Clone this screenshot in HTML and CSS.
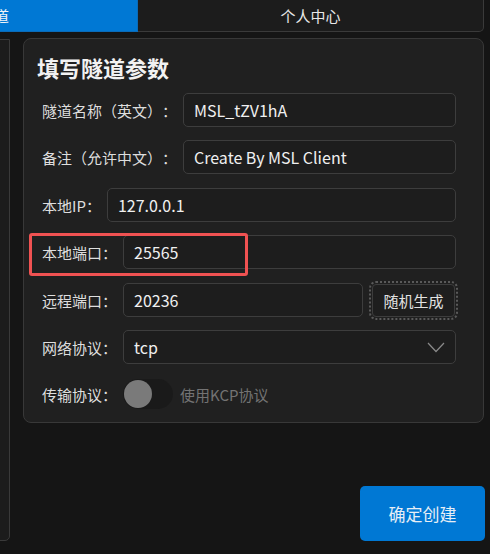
FILE: index.html
```html
<!DOCTYPE html>
<html lang="zh-CN">
<head>
<meta charset="utf-8">
<title>MSL</title>
<link rel="stylesheet" href="styles.css">
</head>
<body>
<div class="page">
  <div class="tabs">
    <div class="tab tab-active">创建隧道</div>
    <div class="tab tab-normal">个人中心</div>
  </div>
  <div class="main">
    <div class="side-panel"></div>
    <div class="content">
      <div class="card">
        <div class="card-title">填写隧道参数</div>
        <div class="form">
          <div class="row r1">
            <span class="label">隧道名称（英文）：</span>
            <div class="input">MSL_tZV1hA</div>
          </div>
          <div class="row r2">
            <span class="label">备注（允许中文）：</span>
            <div class="input">Create By MSL Client</div>
          </div>
          <div class="row r3">
            <span class="label">本地IP：</span>
            <div class="input">127.0.0.1</div>
          </div>
          <div class="row r4 highlight-row">
            <span class="label">本地端口：</span>
            <div class="input">25565</div>
            <div class="highlight"></div>
          </div>
          <div class="row r5">
            <span class="label">远程端口：</span>
            <div class="input">20236</div>
            <button class="btn-random">随机生成</button>
          </div>
          <div class="row r6">
            <span class="label">网络协议：</span>
            <div class="input select">
              <span>tcp</span>
              <svg class="chevron" width="18" height="11" viewBox="0 0 18 11"><polyline points="1,1 9,9.5 17,1" fill="none" stroke="#8a8a8a" stroke-width="1.2"/></svg>
            </div>
          </div>
          <div class="row r7">
            <span class="label">传输协议：</span>
            <div class="toggle"><div class="knob"></div></div>
            <span class="toggle-text">使用KCP协议</span>
          </div>
        </div>
      </div>
      <button class="btn-primary">确定创建</button>
    </div>
  </div>
</div>
</body>
</html>
```

FILE: styles.css
```css
html, body {
  margin: 0;
  padding: 0;
}
body {
  background: #151515;
  width: 490px;
  height: 554px;
  overflow: hidden;
  font-family: "Noto Sans CJK SC", "Noto Sans", sans-serif;
  color: #e6e6e6;
  text-spacing-trim: space-all;
}
.page {
  width: 484px;
  height: 554px;
  display: flex;
  flex-direction: column;
}
.tabs {
  display: flex;
  height: 32px;
  margin-top: -1px;
}
.tab {
  box-sizing: border-box;
  height: 33px;
  display: flex;
  align-items: center;
  font-size: 15px;
  color: #e8e8e8;
}
.tab-active {
  width: 338px;
  margin-left: -200px;
  background: #0078d4;
  border: 1px solid #0b6bb8;
  justify-content: flex-end;
  padding-right: 128px;
  color: #f0f4f8;
}
.tab-normal {
  flex: 1;
  background: #1c1c1c;
  border: 1px solid #3a3a3a;
  border-left: none;
  border-bottom-right-radius: 5px;
  justify-content: center;
}
.main {
  display: flex;
  flex: 1;
  margin-top: 7px;
  margin-bottom: 13px;
}
.side-panel {
  box-sizing: border-box;
  width: 110px;
  margin-left: -100px;
  margin-top: 1px;
  background: #1c1c1c;
  border: 1px solid #3a3a3a;
  border-radius: 0 0 5px 0;
}
.content {
  flex: 1;
  display: flex;
  flex-direction: column;
  margin-left: 13px;
}
.card {
  box-sizing: border-box;
  height: 385px;
  background: #202020;
  border: 1px solid #383838;
  border-radius: 8px;
  padding: 0 27px 0 13px;
}
.card-title {
  margin-top: 13px;
  height: 30px;
  line-height: 30px;
  font-size: 22px;
  font-weight: 700;
  color: #f2f2f2;
}
.form {
  padding-left: 5px;
  margin-top: 11px;
}
.row {
  position: relative;
  display: flex;
  align-items: center;
  height: 34px;
}
.r2 { margin-top: 13px; }
.r3 { margin-top: 14px; }
.r4 { margin-top: 13px; }
.r5 { margin-top: 14px; }
.r6 { margin-top: 13px; }
.r7 { margin-top: 15px; height: 30px; }
.label {
  font-size: 15px;
  color: #dedede;
  white-space: nowrap;
  margin-right: 6px;
}
.input {
  box-sizing: border-box;
  flex: 1;
  height: 34px;
  display: flex;
  align-items: center;
  padding: 0 10px;
  background: #1d1d1d;
  border: 1px solid #3d3d3d;
  border-radius: 5px;
  font-size: 16px;
  color: #f0f0f0;
}
.select {
  justify-content: space-between;
  padding-right: 10px;
}
.chevron {
  display: block;
}
.btn-random {
  box-sizing: border-box;
  width: 83px;
  height: 33px;
  margin-left: 9px;
  margin-right: 1px;
  background: #1e1e1e;
  border: 1px solid #3d3d3d;
  border-radius: 4px;
  outline: 2px dotted #5a5a5a;
  outline-offset: 1px;
  font-family: inherit;
  font-size: 15px;
  color: #e2e2e2;
  padding: 0;
}
.highlight {
  position: absolute;
  left: -13px;
  top: -2px;
  width: 219px;
  height: 43px;
  box-sizing: border-box;
  border: 3px solid #f05252;
  border-radius: 3px;
  pointer-events: none;
}
.toggle {
  width: 50px;
  height: 30px;
  border-radius: 15px;
  background: #1a1a1a;
  display: flex;
  align-items: center;
  padding-left: 1px;
  box-sizing: border-box;
}
.knob {
  width: 28px;
  height: 28px;
  border-radius: 50%;
  background: #7a7a7a;
}
.toggle-text {
  margin-left: 7px;
  font-size: 15px;
  color: #737373;
}
.btn-primary {
  align-self: flex-end;
  margin-top: auto;
  margin-right: -1px;
  width: 125px;
  height: 55px;
  background: #0078d4;
  border: none;
  border-radius: 5px;
  font-family: inherit;
  font-size: 17px;
  color: #e6eef6;
  padding: 0;
}
```
